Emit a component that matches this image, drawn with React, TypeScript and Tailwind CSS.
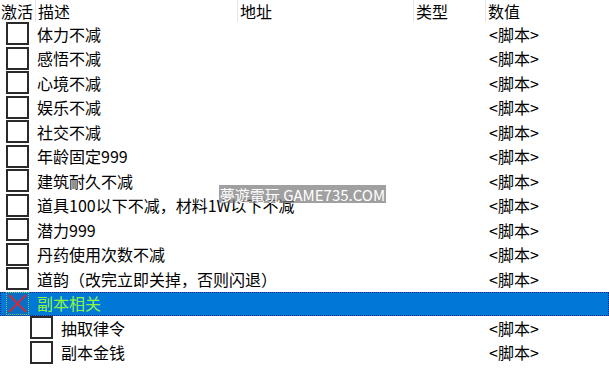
import React from "react";

type Row = { text: string; level: number; value?: string; selected?: boolean };

const rows: Row[] = [
  { text: "体力不减", level: 0, value: "<脚本>" },
  { text: "感悟不减", level: 0, value: "<脚本>" },
  { text: "心境不减", level: 0, value: "<脚本>" },
  { text: "娱乐不减", level: 0, value: "<脚本>" },
  { text: "社交不减", level: 0, value: "<脚本>" },
  { text: "年龄固定999", level: 0, value: "<脚本>" },
  { text: "建筑耐久不减", level: 0, value: "<脚本>" },
  { text: "道具100以下不减，材料1W以下不减", level: 0, value: "<脚本>" },
  { text: "潜力999", level: 0, value: "<脚本>" },
  { text: "丹药使用次数不减", level: 0, value: "<脚本>" },
  { text: "道韵（改完立即关掉，否则闪退）", level: 0, value: "<脚本>" },
  { text: "副本相关", level: 0, selected: true },
  { text: "抽取律令", level: 1, value: "<脚本>" },
  { text: "副本金钱", level: 1, value: "<脚本>" },
];

const font = { fontFamily: '"Noto Sans CJK SC", "Noto Sans", sans-serif' };

function Check({ selected }: { selected?: boolean }) {
  if (selected) {
    return (
      <div className="relative w-[23px] h-[23px] border border-dotted border-[#6fd16f] bg-[#0a6fc4]">
        <svg className="absolute inset-0" width="21" height="21" viewBox="0 0 21 21">
          <line x1="2" y1="2" x2="19" y2="19" stroke="#ff1a1a" strokeWidth="1.6" />
          <line x1="19" y1="2" x2="2" y2="19" stroke="#ff1a1a" strokeWidth="1.6" />
        </svg>
      </div>
    );
  }
  return <div className="w-[23px] h-[23px] border-2 border-[#2a2a2a] bg-white" />;
}

export default function App() {
  return (
    <div className="relative w-[609px] h-[390px] bg-white overflow-hidden text-black" style={font}>
      {/* header */}
      <div className="flex h-[22px] items-center text-[16px] leading-none">
        <div className="w-[36px] pl-[1px] border-r border-[#e5e5e5] h-full flex items-center">激活</div>
        <div className="w-[202px] pl-[2px] border-r border-[#e5e5e5] h-full flex items-center">描述</div>
        <div className="w-[176px] pl-[2px] border-r border-[#e5e5e5] h-full flex items-center">地址</div>
        <div className="w-[72px] pl-[2px] border-r border-[#e5e5e5] h-full flex items-center">类型</div>
        <div className="flex-1 pl-[2px] h-full flex items-center">数值</div>
      </div>
      {/* rows */}
      {rows.map((r, i) => (
        <div
          key={i}
          className={
            "flex h-[24.5px] items-start text-[16px] " +
            (r.selected ? "bg-[#0078d7] outline outline-1 outline-dotted outline-[#1a2a7a] -outline-offset-1" : "")
          }
        >
          <div className={r.level === 1 ? "w-[61px] pl-[30px] pt-0 flex" : "w-[37px] pl-[6px] flex"}>
            <Check selected={r.selected} />
          </div>
          <div
            className={
              "h-[23px] flex items-center leading-none whitespace-nowrap " +
              (r.level === 1 ? "w-[428px]" : "w-[452px]") +
              (r.selected ? " text-[#8cf542]" : "")
            }
          >
            {r.text}
          </div>
          <div className="h-[23px] flex items-center leading-none whitespace-nowrap">{r.value ?? ""}</div>
        </div>
      ))}
      {/* watermark */}
      <div className="absolute left-[219px] top-[185px] w-[167px] h-[18px] bg-[rgba(120,120,120,0.7)] flex items-center justify-center text-white text-[15px] leading-none whitespace-nowrap">
        夢遊電玩 GAME735.COM
      </div>
    </div>
  );
}
